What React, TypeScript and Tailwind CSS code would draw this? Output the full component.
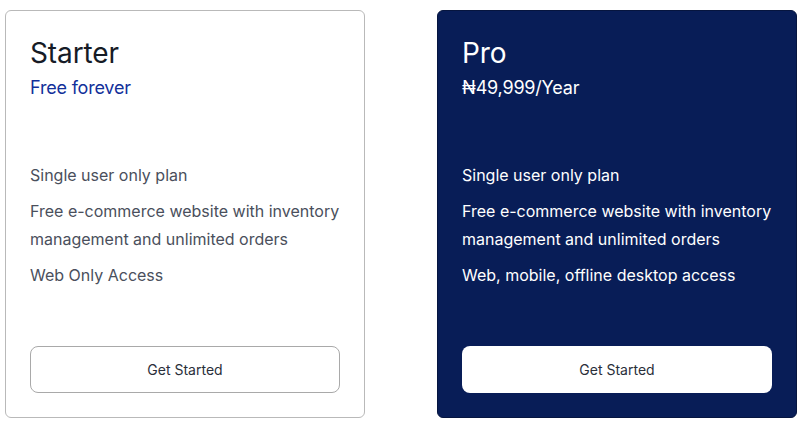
const PLANS = [
  {
    name: 'Starter',
    price: 'Free forever',
    features: [
      'Single user only plan',
      'Free e-commerce website with inventory management and unlimited orders',
      'Web Only Access',
    ],
    featured: false,
  },
  {
    name: 'Pro',
    price: '₦49,999/Year',
    features: [
      'Single user only plan',
      'Free e-commerce website with inventory management and unlimited orders',
      'Web, mobile, offline desktop access',
    ],
    featured: true,
  },
];

export default function App() {
  return (
    <div
      className="flex min-h-[431px] w-[806px] gap-[72px] bg-white pl-[5px] pt-[10px]"
      style={{ fontFamily: 'Inter, "Noto Sans", sans-serif' }}
    >
      {PLANS.map((plan) => (
        <div
          key={plan.name}
          className={
            plan.featured
              ? 'flex h-[408px] w-[360px] flex-col rounded-md border border-[#06153f] bg-[#081d57] px-[24px] pb-[24px] pt-[25px]'
              : 'flex h-[408px] w-[360px] flex-col rounded-md border border-[#b9b9b9] bg-white px-[24px] pb-[24px] pt-[25px]'
          }
        >
          <p
            className={
              plan.featured
                ? 'text-[28px] leading-[34px] tracking-[-0.1px] text-white'
                : 'text-[28px] leading-[34px] tracking-[-0.1px] text-[#161b26]'
            }
          >
            {plan.name}
          </p>
          <p
            className={
              plan.featured
                ? 'mt-[5px] text-[18px] leading-[26px] tracking-[-0.2px] text-white'
                : 'mt-[5px] text-[18px] leading-[26px] tracking-[-0.2px] text-[#12309a]'
            }
          >
            {plan.price}
          </p>

          <ul className="mt-[60px] flex flex-col gap-[8px]">
            {plan.features.map((feature) => (
              <li
                key={feature}
                className={
                  plan.featured
                    ? 'text-[16px] leading-[28px] tracking-[0px] text-white'
                    : 'text-[16px] leading-[28px] tracking-[0px] text-[#4a4f5c]'
                }
              >
                {feature}
              </li>
            ))}
          </ul>

          <button
            type="button"
            className={
              plan.featured
                ? 'mt-auto h-[47px] w-full rounded-lg bg-white text-[14px] text-[#2a2f3a]'
                : 'mt-auto h-[47px] w-full rounded-lg border border-[#a9a9a9] bg-white text-[14px] text-[#2a2f3a]'
            }
          >
            Get Started
          </button>
        </div>
      ))}
    </div>
  );
}
